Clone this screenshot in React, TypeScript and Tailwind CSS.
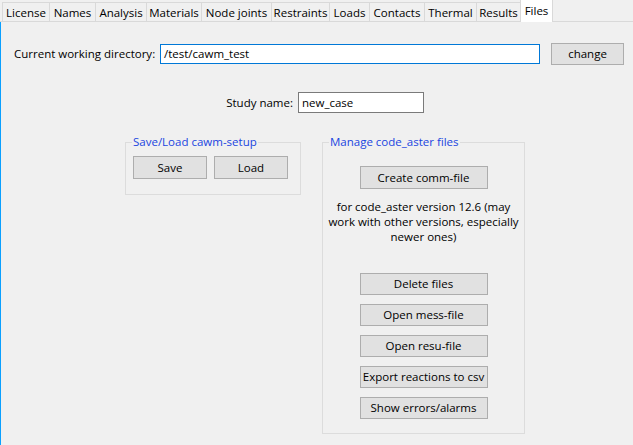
import React from 'react'

const tabs = [
  { label: 'License', w: 'w-[47px]' },
  { label: 'Names', w: 'w-[46px]' },
  { label: 'Analysis', w: 'w-[51px]' },
  { label: 'Materials', w: 'w-[55px]' },
  { label: 'Node joints', w: 'w-[70px]' },
  { label: 'Restraints', w: 'w-[58px]' },
  { label: 'Loads', w: 'w-[40px]' },
  { label: 'Contacts', w: 'w-[55px]' },
  { label: 'Thermal', w: 'w-[52px]' },
  { label: 'Results', w: 'w-[44px]' },
]

function Btn({ children, className = '' }: { children: React.ReactNode; className?: string }) {
  return (
    <button
      className={`flex items-center justify-center bg-[#e1e1e1] border border-[#adadad] text-black leading-none whitespace-nowrap ${className}`}
    >
      {children}
    </button>
  )
}

export default function App() {
  const fileButtons = ['Delete files', 'Open mess-file', 'Open resu-file', 'Export reactions to csv', 'Show errors/alarms']

  return (
    <div
      className="w-[633px] h-[445px] bg-[#f0f0f0] overflow-hidden flex flex-col text-[11.5px] text-black"
      style={{ fontFamily: '"Segoe UI", "Open Sans", "Noto Sans", sans-serif' }}
    >
      {/* tab strip */}
      <div className="flex items-end h-[22px] pl-[2px] shrink-0 relative">
        <div className="absolute left-0 right-0 bottom-0 h-px bg-[#d9d9d9]" />
        {tabs.map(t => (
          <div
            key={t.label}
            className={`relative ${t.w} h-[20px] border-t border-l border-[#d9d9d9] flex items-center justify-center pt-px whitespace-nowrap`}
          >
            {t.label}
          </div>
        ))}
        <div className="relative w-[33px] h-[22px] bg-white border-x border-[#d9d9d9] flex items-center justify-center pb-px">
          Files
        </div>
      </div>

      {/* page */}
      <div className="flex-1 flex flex-col border-l border-[#0aa0ff]">
        <div className="flex items-center mt-[21px] pl-[13px] h-[22px]">
          <span className="w-[146px] whitespace-nowrap">Current working directory:</span>
          <div className="w-[380px] h-[20px] bg-white border border-[#0078d7] flex items-center pl-[3px]">
            /test/cawm_test
          </div>
          <Btn className="w-[73px] h-[22px] ml-[11px]">change</Btn>
        </div>

        <div className="flex items-center mt-[27px] pl-[225px] h-[21px]">
          <span className="w-[72px] text-right pr-[5px] whitespace-nowrap">Study name:</span>
          <div className="w-[126px] h-[21px] bg-white border border-[#7a7a7a] flex items-center pl-[3px]">
            new_case
          </div>
        </div>

        <div className="flex items-start mt-[22px] pl-[124px] gap-[21px]">
          <fieldset className="w-[176px] border border-[#dcdcdc] px-[7px] pt-[7px] pb-[15px] m-0 min-w-0">
            <legend className="text-[#1a45e0] leading-[14px] px-[1px] -ml-px">Save/Load cawm-setup</legend>
            <div className="flex gap-[7px]">
              <Btn className="w-[74px] h-[23px]">Save</Btn>
              <Btn className="w-[74px] h-[23px]">Load</Btn>
            </div>
          </fieldset>

          <fieldset className="w-[203px] border border-[#dcdcdc] px-[7px] pt-[17px] pb-[14px] m-0 min-w-0">
            <legend className="text-[#1a45e0] leading-[14px] px-[1px] -ml-px">Manage code_aster files</legend>
            <div className="flex flex-col items-center">
              <Btn className="w-[128px] h-[23px]">Create comm-file</Btn>
              <p className="mt-[10px] text-center leading-[15px] whitespace-nowrap">
                for code_aster version 12.6 (may
                <br />
                work with other versions, especially
                <br />
                newer ones)
              </p>
              <div className="flex flex-col gap-[9px] mt-[29px]">
                {fileButtons.map(b => (
                  <Btn key={b} className="w-[128px] h-[22px]">
                    {b}
                  </Btn>
                ))}
              </div>
            </div>
          </fieldset>
        </div>
      </div>
    </div>
  )
}
